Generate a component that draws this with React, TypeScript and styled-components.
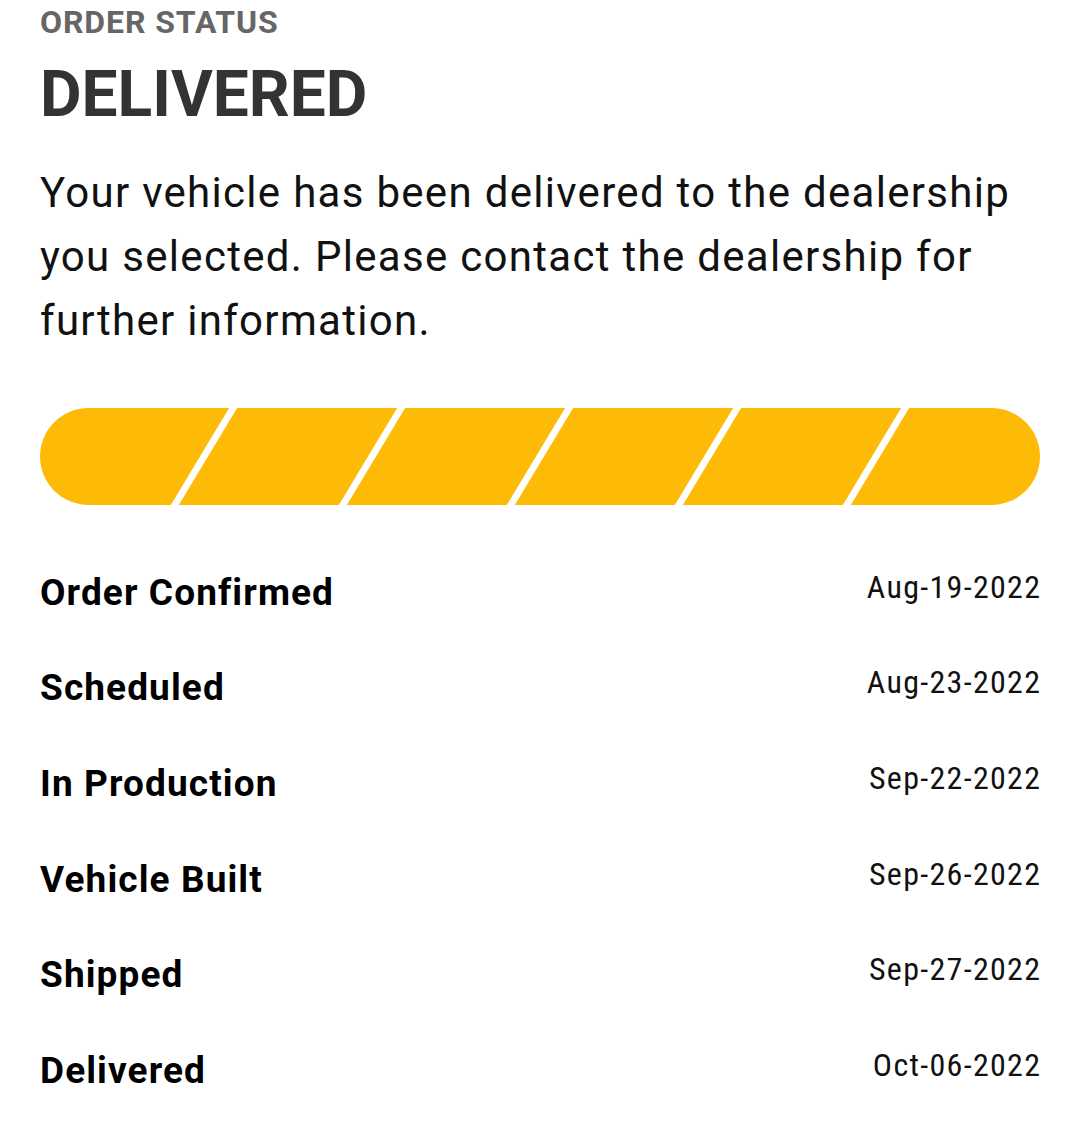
import React from 'react';
import styled, { createGlobalStyle } from 'styled-components';

const GlobalStyle = createGlobalStyle`
  html, body {
    margin: 0;
    padding: 0;
    background: #ffffff;
  }
  body {
    font-family: Roboto, "Noto Sans", "Liberation Sans", sans-serif;
  }
`;

// 주문 단계 데이터
const steps = [
  { label: 'Order Confirmed', date: 'Aug-19-2022' },
  { label: 'Scheduled', date: 'Aug-23-2022' },
  { label: 'In Production', date: 'Sep-22-2022' },
  { label: 'Vehicle Built', date: 'Sep-26-2022' },
  { label: 'Shipped', date: 'Sep-27-2022' },
  { label: 'Delivered', date: 'Oct-06-2022' },
];

const App = () => {
  return (
    <Page>
      <GlobalStyle />
      <Eyebrow>ORDER STATUS</Eyebrow>
      <Title>DELIVERED</Title>
      <Description>
        Your vehicle has been delivered to the dealership you selected. Please contact the dealership for further
        information.
      </Description>

      <Track>
        <SegmentRow>
          {steps.map((step, i) => (
            <Segment key={step.label} $edge={i === 0 || i === steps.length - 1} />
          ))}
        </SegmentRow>
      </Track>

      <StepList>
        {steps.map((step) => (
          <StepRow key={step.label}>
            <StepLabel>{step.label}</StepLabel>
            <StepDate>{step.date}</StepDate>
          </StepRow>
        ))}
      </StepList>
    </Page>
  );
};

export default App;

const Page = styled.div`
  width: 1080px;
  box-sizing: border-box;
  padding: 2px 40px 20px;
`;

const Eyebrow = styled.div`
  font-size: 32px;
  line-height: 40px;
  font-weight: 700;
  letter-spacing: 0.9px;
  color: #666666;
`;

const Title = styled.h1`
  margin: 13px 0 0;
  font-size: 64px;
  line-height: 80px;
  font-weight: 700;
  color: #333333;
`;

const Description = styled.p`
  margin: 26px 0 0;
  font-size: 42px;
  line-height: 64px;
  font-weight: 400;
  letter-spacing: 1.3px;
  color: #111111;
`;

const Track = styled.div`
  margin-top: 55px;
  height: 97px;
  border-radius: 49px;
  overflow: hidden;
`;

const SegmentRow = styled.div`
  display: flex;
  gap: 8px;
  height: 100%;
  margin: 0 -30px;
`;

const Segment = styled.div<{ $edge: boolean }>`
  flex: 1 1 ${({ $edge }) => ($edge ? '30px' : '0')};
  background: #fdbb07;
  transform: skewX(-31deg);
`;

const StepList = styled.div`
  margin-top: 40px;
  display: flex;
  flex-direction: column;
`;

const StepRow = styled.div`
  display: flex;
  justify-content: space-between;
  align-items: flex-start;
  padding: 23.8px 0;
`;

const StepLabel = styled.div`
  font-size: 37px;
  line-height: 48px;
  font-weight: 700;
  letter-spacing: 1.1px;
  color: #000000;
`;

const StepDate = styled.div`
  margin: -2px -1.3px 0 0;
  font-size: 32px;
  line-height: 40px;
  font-weight: 400;
  font-stretch: 75%;
  letter-spacing: 1.3px;
  color: #111111;
`;
